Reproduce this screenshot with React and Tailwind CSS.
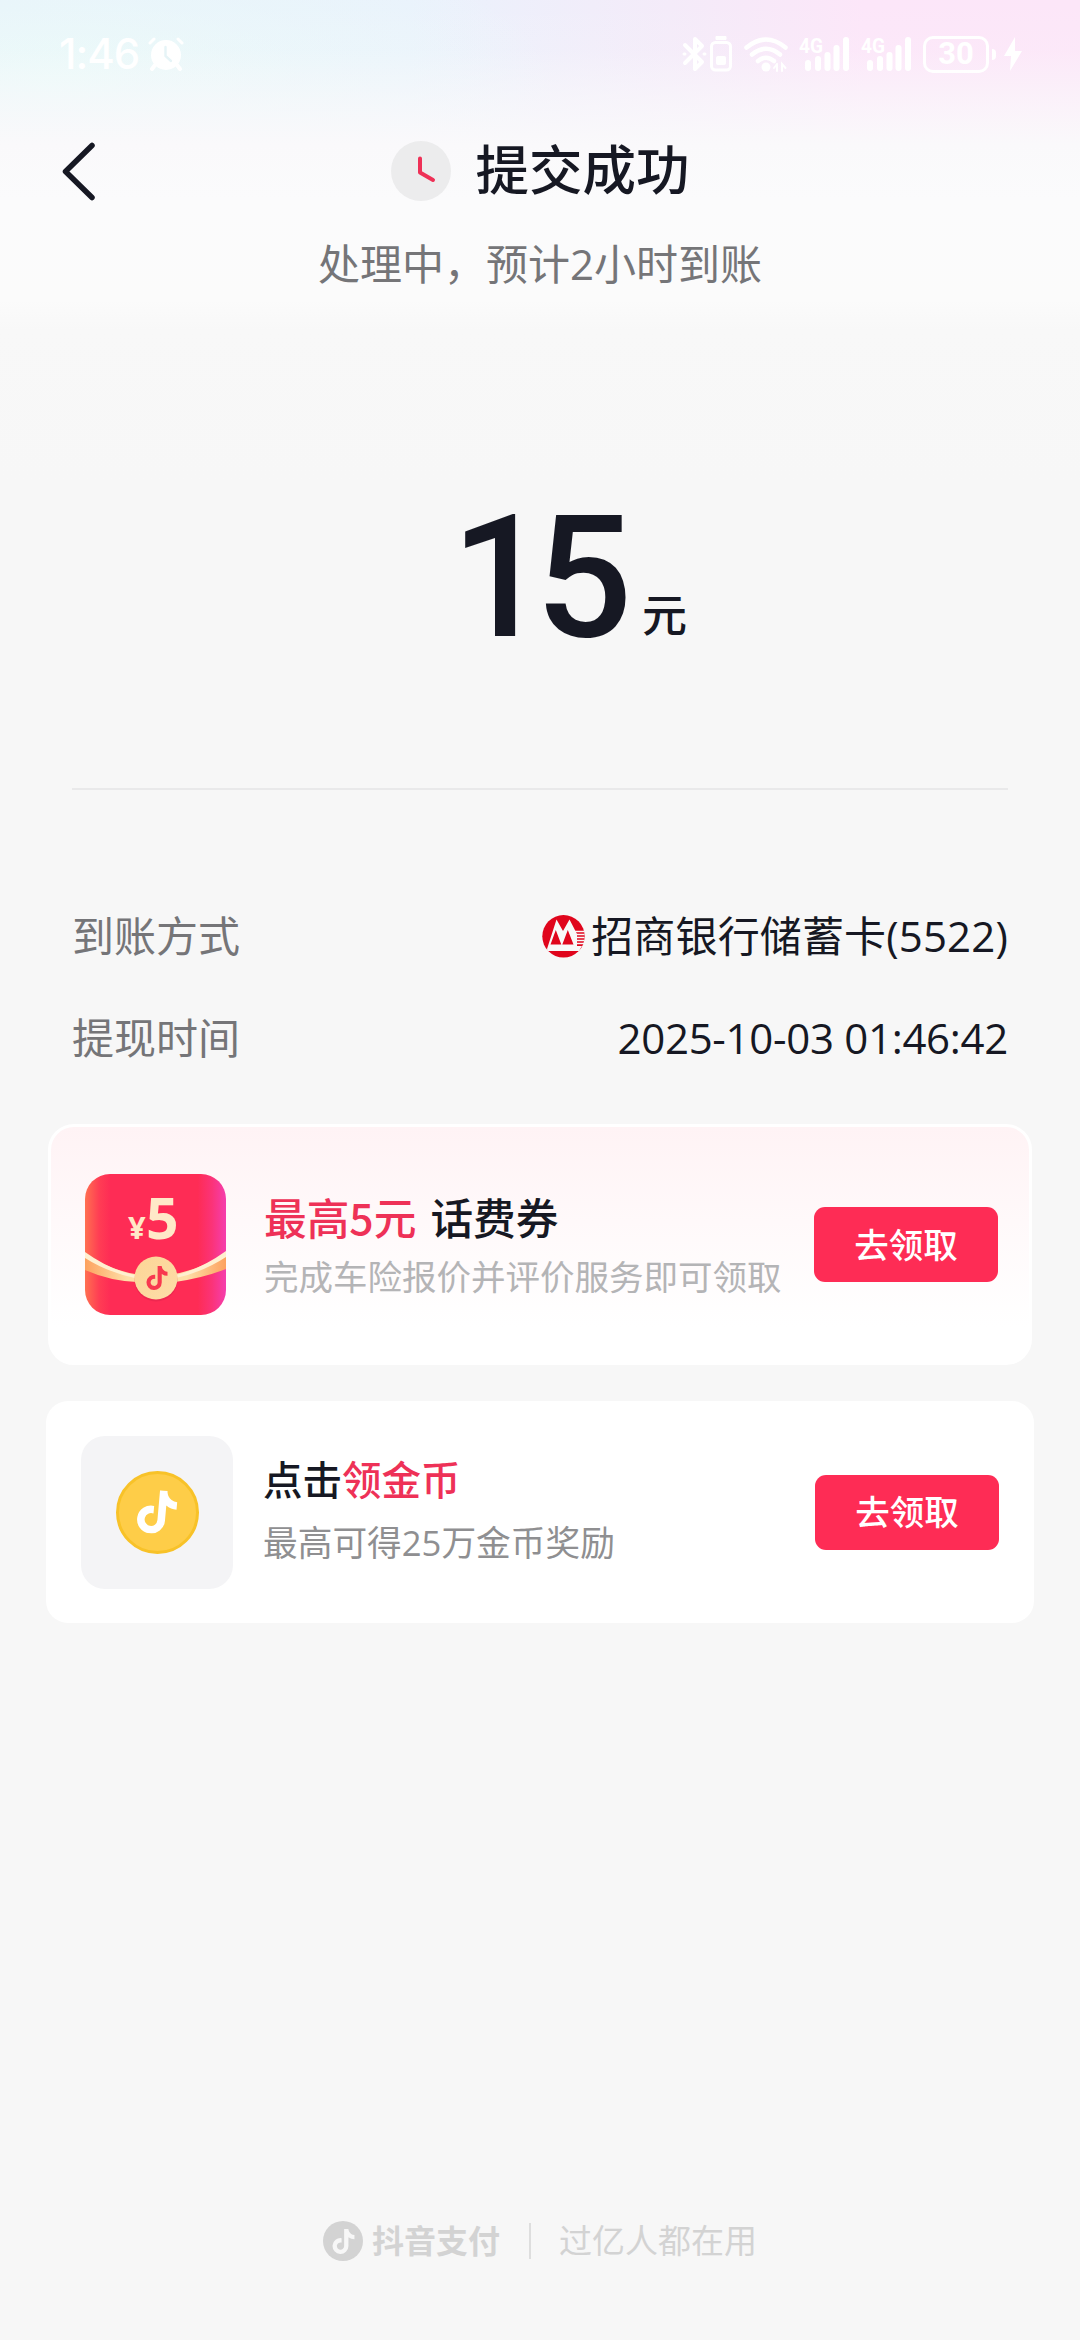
import React from "react";
import { FaTiktok } from "react-icons/fa6";

function AlarmIcon() {
  return (
    <svg width="36" height="34" viewBox="0 0 36 34" fill="none" stroke="white" strokeLinecap="round">
      <circle cx="18" cy="18" r="15" fill="white" stroke="none" />
      <path d="M2 6 L6 2 M34 6 L30 2" strokeWidth="3" />
      <path d="M7 28 L4 32 M29 28 L32 32" strokeWidth="4" />
      <path d="M17.500 10 V19 L23 24" stroke="#e6f4f7" strokeWidth="2.400" />
    </svg>
  );
}

function BluetoothIcon() {
  return (
    <svg width="25" height="36" viewBox="0 0 25 36" fill="none" stroke="white" strokeWidth="4" strokeLinejoin="round" strokeLinecap="round">
      <path d="M3 9 L20 26 L13 33 V3 L20 10 L3 27" />
      <path d="M2 18 h1 M22 18 h1" strokeWidth="3" />
    </svg>
  );
}

function DeviceBatteryIcon() {
  return (
    <svg width="22" height="36" viewBox="0 0 22 36" fill="none">
      <rect x="5.500" y="0" width="11" height="4" rx="1" fill="white" />
      <rect x="1.500" y="6.500" width="19" height="27.500" rx="4" stroke="white" strokeWidth="3" />
      <rect x="6" y="20" width="10" height="9" rx="2" fill="white" />
    </svg>
  );
}

function WifiIcon() {
  return (
    <svg width="44" height="35" viewBox="0 0 44 35" fill="none" stroke="white" strokeWidth="4.500" strokeLinecap="round">
      <path d="M2.500 10.500 Q22 -5.500 41.500 10.500" />
      <path d="M8 17.500 Q22 6 36 17.500" />
      <path d="M14 24 Q22 17.500 30 24" />
      <circle cx="22" cy="30" r="4.500" fill="white" stroke="none" />
      <path d="M33 27 V34 M33 27 L30 31 M38 34 V27 L41.500 31" strokeWidth="2" />
    </svg>
  );
}

function SignalIcon() {
  return (
    <svg className="overflow-visible" width="50" height="35" viewBox="0 0 50 35" fill="white">
      <text x="0" y="16" fontSize="20" fontWeight="700" fontFamily="Roboto, sans-serif" textLength="24" lengthAdjust="spacingAndGlyphs">4G</text>
      <rect x="6" y="23" width="6" height="11" rx="3" />
      <rect x="16" y="19" width="6" height="15" rx="3" />
      <rect x="25.500" y="15" width="6" height="19" rx="3" />
      <rect x="34.500" y="8" width="6" height="26" rx="3" />
      <rect x="44" y="0" width="6" height="34" rx="3" />
    </svg>
  );
}

function BoltIcon() {
  return (
    <svg width="18" height="34" viewBox="0 0 18 34" fill="white">
      <path d="M11 0 L0 19 H7 L6 34 L18 14 H11 Z" />
    </svg>
  );
}

function BankLogo() {
  return (
    <svg width="43" height="43" viewBox="0 0 43 43">
      <circle cx="21.500" cy="21.300" r="21.200" fill="#e0051c" />
      <path d="M5.500 36 L5 34 L14.500 4.500 L21 16 L27.500 4.500 L35 19 V36 Z" fill="#f8f8f8" />
      <path d="M8.500 29.500 L13.800 15 L19.300 29.500 Z M20.300 29.500 L25.800 15 L31.500 29.500 Z" fill="#e0051c" />
      <path d="M32 16.500 H42.500 M34 19.500 H42.500 M35 22.500 H42.500 M35 25.500 H42.500 M35 28.500 H42" stroke="#f8f8f8" strokeWidth="1.300" />
      <path d="M31 31 H40 L37 36 H31 Z" fill="#f8f8f8" />
    </svg>
  );
}

function Envelope() {
  return (
    <div className="relative h-[141px] w-[141px] overflow-hidden rounded-[25px] bg-[linear-gradient(90deg,#ff7050_0%,#ff3d54_10%,#fe2c55_18%,#fe2c55_80%,#fb3378_90%,#f53eae_100%)]">
      <svg className="absolute inset-0" width="141" height="141" viewBox="0 0 141 141">
        <defs>
          <linearGradient id="ribbon" x1="0" x2="1" y1="0" y2="0">
            <stop offset="0" stopColor="#fda25f" />
            <stop offset="0.300" stopColor="#fee0a8" />
            <stop offset="0.720" stopColor="#fee0a8" />
            <stop offset="1" stopColor="#fda25f" />
          </linearGradient>
          <linearGradient id="seal" x1="0" x2="1" y1="0" y2="1">
            <stop offset="0" stopColor="#fcd596" />
            <stop offset="1" stopColor="#fddca8" />
          </linearGradient>
        </defs>
        <path d="M0 80 Q70 124 141 79 V95 Q118 104 90 108 H52 Q25 107 0 96 Z" fill="url(#ribbon)" />
        <path d="M0 78 Q25 96 50 101 L50 104 Q22 98 0 84 Z M141 77 Q116 95 91 101 L91 104 Q118 98 141 83 Z" fill="#fff0d0" />
        <circle cx="71" cy="106" r="21.500" fill="#d92148" opacity="0.400" />
        <circle cx="71" cy="104" r="21.500" fill="url(#seal)" />
      </svg>
      <div className="absolute left-[43px] top-[17px] flex items-baseline font-['Open_Sans','Noto_Sans_CJK_SC',sans-serif] font-bold text-[#ffe9c8]">
        <span className="w-[18px] text-[31px] leading-[52px]">¥</span>
        <span className="text-[57px] leading-[52px]">5</span>
      </div>
      <FaTiktok className="absolute left-[60px] top-[92px] text-[24px] text-[#f8384f]" />
    </div>
  );
}

function ClaimButton() {
  return (
    <button className="flex h-[75px] w-[184px] items-center justify-center rounded-[11px] bg-[#fe2c55] text-[34.500px] font-medium leading-[50px] text-white">
      <span className="block">去领取</span>
    </button>
  );
}

export default function App() {
  return (
    <div className="flex h-[2340px] w-[1080px] flex-col bg-[#f7f7f7] font-['Open_Sans','Noto_Sans_CJK_SC',sans-serif] text-[#161823]">
      <div className="flex h-[741px] flex-col bg-[linear-gradient(180deg,transparent_0px,rgba(250,250,251,0.100)_50px,rgba(250,249,251,0.600)_100px,#faf9fb_145px,#fbfbfc_200px,#fbfbfb_300px,#f8f8f8_330px,#f7f7f7_480px),radial-gradient(ellipse_500px_160px_at_60px_80px,#eafaf9_0%,transparent_100%),linear-gradient(90deg,#e8f1fb_0%,#eaf2fc_38%,#f4ebf9_62%,#fce6f9_80%,#fce6f8_100%)]">
        <div className="flex h-[108px] items-center pl-[59px] pr-[58px] text-white">
          <span className="w-[80px] whitespace-nowrap font-['Inter',sans-serif] text-[42px] font-medium leading-[40px] tracking-[-1px]">1:46</span>
          <span className="ml-[9px]"><AlarmIcon /></span>
          <div className="ml-auto flex items-center">
            <BluetoothIcon />
            <span className="ml-[3px]"><DeviceBatteryIcon /></span>
            <span className="ml-[12px]"><WifiIcon /></span>
            <span className="ml-[11px]"><SignalIcon /></span>
            <span className="ml-[12px]"><SignalIcon /></span>
            <span className="ml-[12px] flex h-[37px] w-[66px] items-center justify-center rounded-[10px] border-[3px] border-white font-['Roboto',sans-serif] text-[31px] font-bold leading-[30px]">30</span>
            <span className="ml-[3px] h-[11px] w-[4px] rounded-r-[4px] bg-white" />
            <span className="ml-[8px]"><BoltIcon /></span>
          </div>
        </div>

        <header className="grid h-[126px] grid-cols-[1fr_auto_1fr] items-center">
          <svg className="ml-[61px]" width="36" height="60" viewBox="0 0 36 60" fill="none" stroke="#161823" strokeWidth="5.500" strokeLinecap="round" strokeLinejoin="round">
            <path d="M31 4.500 L4.500 30.500 L31 56.500" />
          </svg>
          <div className="flex items-center gap-[25px]">
            <svg width="60" height="60" viewBox="0 0 60 60" fill="none">
              <circle cx="30" cy="30" r="30" fill="#ececed" />
              <path d="M29 17.500 V31.500 L42 39" stroke="#ee3157" strokeWidth="4" strokeLinecap="round" strokeLinejoin="round" />
            </svg>
            <h1 className="mb-[2px] text-[53.500px] font-medium leading-[60px]">提交成功</h1>
          </div>
        </header>

        <p className="mt-[2px] text-center text-[42px] leading-[56px] text-[#757578]">处理中，预计2小时到账</p>

        <div className="mt-[211px] flex h-[150px] items-baseline pl-[451px]">
          <span className="w-[182px] font-['Roboto',sans-serif] text-[171px] font-medium leading-[150px] tracking-[-13px]">15</span>
          <span className="ml-[9px] block -translate-y-[4px] text-[45px] font-medium leading-[50px]">元</span>
        </div>
      </div>

      <div className="mx-[72px] mt-[47px] h-[2px] bg-[#e9e9ea]" />

      <dl className="mx-[72px] mt-[116px] flex flex-col gap-[42px] text-[42px] leading-[60px]">
        <div className="flex h-[60px] items-center justify-between">
          <dt className="text-[#757578]">到账方式</dt>
          <dd className="flex items-center gap-[6px]">
            <BankLogo />
            <span className="tracking-[0.150px]">招商银行储蓄卡(5522)</span>
          </dd>
        </div>
        <div className="flex h-[60px] items-center justify-between">
          <dt className="text-[#757578]">提现时间</dt>
          <dd className="tracking-[-0.300px]">2025-10-03 01:46:42</dd>
        </div>
      </dl>

      <section className="mx-[48px] mt-[56px] flex h-[241px] items-center rounded-[26px] border-[3px] border-white bg-[linear-gradient(180deg,#fff3f5_0%,#fff9fa_40%,#ffffff_85%)] pl-[34px] pr-[31px]">
        <Envelope />
        <div className="ml-[38px] mt-[4px] flex flex-col">
          <h2 className="flex gap-[14px] font-['Noto_Sans_CJK_SC',sans-serif] text-[42.700px] font-medium leading-[58px]"><span className="text-[#ee3157]">最高5元</span><span>话费券</span></h2>
          <p className="mt-[2px] text-[34.500px] leading-[60px] text-[#b4b4b6]">完成车险报价并评价服务即可领取</p>
        </div>
        <div className="ml-auto"><ClaimButton /></div>
      </section>

      <section className="mx-[46px] mt-[36px] flex h-[222px] items-center rounded-[22px] bg-white pl-[35px] pr-[35px]">
        <div className="flex h-[153px] w-[152px] items-center justify-center rounded-[24px] bg-[#f4f4f6]">
          <div className="flex h-[83px] w-[83px] items-center justify-center rounded-full border-[3px] border-[#f8c228] bg-[#fecd48]">
            <FaTiktok className="rotate-[5deg] text-[44px] text-white" />
          </div>
        </div>
        <div className="ml-[30px] flex flex-col">
          <h2 className="text-[39.500px] font-medium leading-[62px]">点击<span className="text-[#ee3157]">领金币</span></h2>
          <p className="text-[34.700px] leading-[64px] text-[#8f8f91]">最高可得25万金币奖励</p>
        </div>
        <div className="ml-auto"><ClaimButton /></div>
      </section>

      <footer className="mb-[74px] mt-auto flex h-[50px] items-center pl-[323px] text-[#d3d3d3]">
        <div className="flex h-[40px] w-[40px] items-center justify-center rounded-full bg-[#d3d3d3]">
          <FaTiktok className="text-[25px] text-[#f7f7f7]" />
        </div>
        <span className="ml-[9px] text-[32px] font-bold leading-[50px]">抖音支付</span>
        <span className="ml-[29px] h-[36px] w-[2px] bg-[#dedede]" />
        <span className="ml-[28px] text-[33px] leading-[50px]">过亿人都在用</span>
      </footer>
    </div>
  );
}
